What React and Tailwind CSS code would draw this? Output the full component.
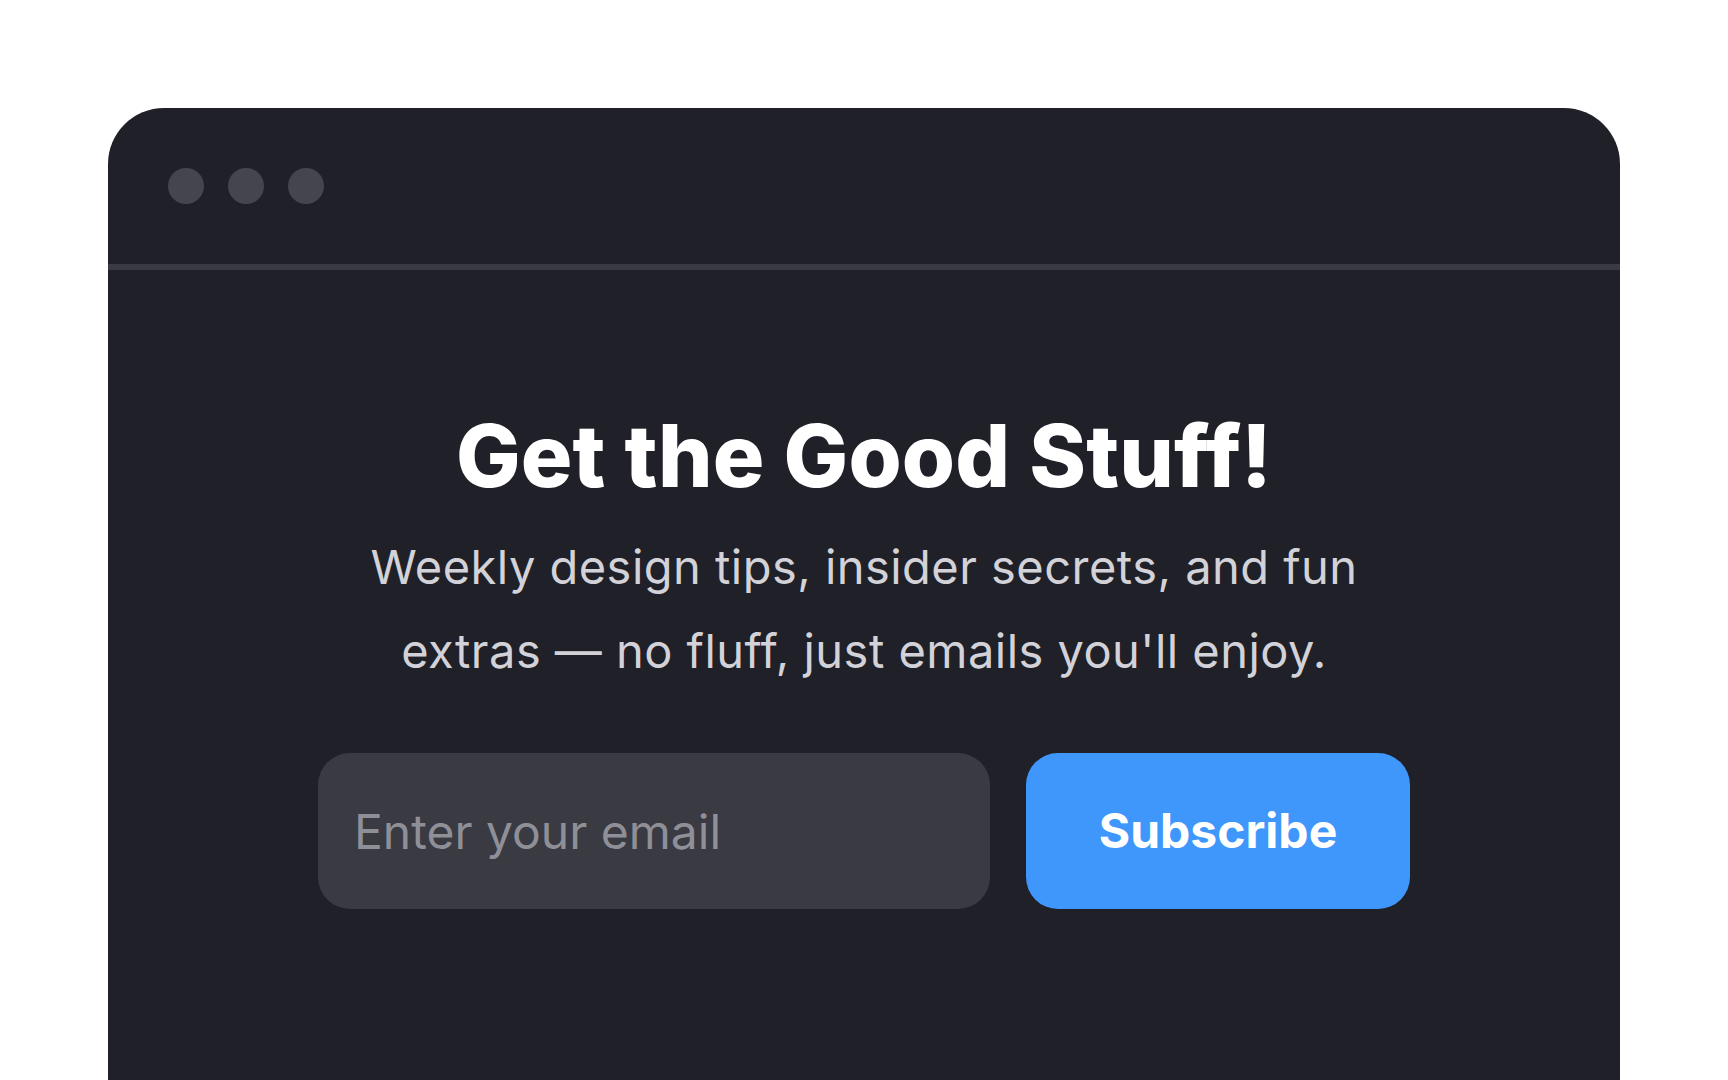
import React from "react";

const App = () => {
  return (
    <div className="min-h-screen w-full overflow-hidden bg-white pt-[108px] px-[108px] font-['Inter','Liberation_Sans',sans-serif]">
      <div className="min-h-[1000px] w-full rounded-t-[56px] bg-[#1f2028]">
        <div className="flex h-[156px] items-center gap-6 px-[60px]">
          <span className="h-9 w-9 rounded-full bg-[#45454f]" />
          <span className="h-9 w-9 rounded-full bg-[#45454f]" />
          <span className="h-9 w-9 rounded-full bg-[#45454f]" />
        </div>
        <div className="h-[6px] w-full bg-[#3a3a44]" />

        <div className="flex flex-col items-center pt-[143px]">
          <h1 className="text-[86px] leading-none font-extrabold tracking-[0.002em] text-white">
            Get the Good Stuff!
          </h1>
          <p className="mt-[26px] max-w-[1060px] text-center text-[47px] leading-[84px] tracking-[0.01em] text-[#d2d2d8]">
            Weekly design tips, insider secrets, and fun extras — no fluff, just
            emails you'll enjoy.
          </p>
          <form
            className="mt-[60px] flex gap-9"
            onSubmit={(e) => e.preventDefault()}
          >
            <input
              type="email"
              placeholder="Enter your email"
              className="h-[156px] w-[672px] rounded-[32px] bg-[#3a3a43] px-9 text-[48px] text-white outline-none placeholder:text-[#8f8f98]"
            />
            <button
              type="submit"
              className="h-[156px] w-[384px] rounded-[32px] bg-[#3f97fc] text-[48px] font-bold text-white"
            >
              Subscribe
            </button>
          </form>
        </div>
      </div>
    </div>
  );
};

export default App;
